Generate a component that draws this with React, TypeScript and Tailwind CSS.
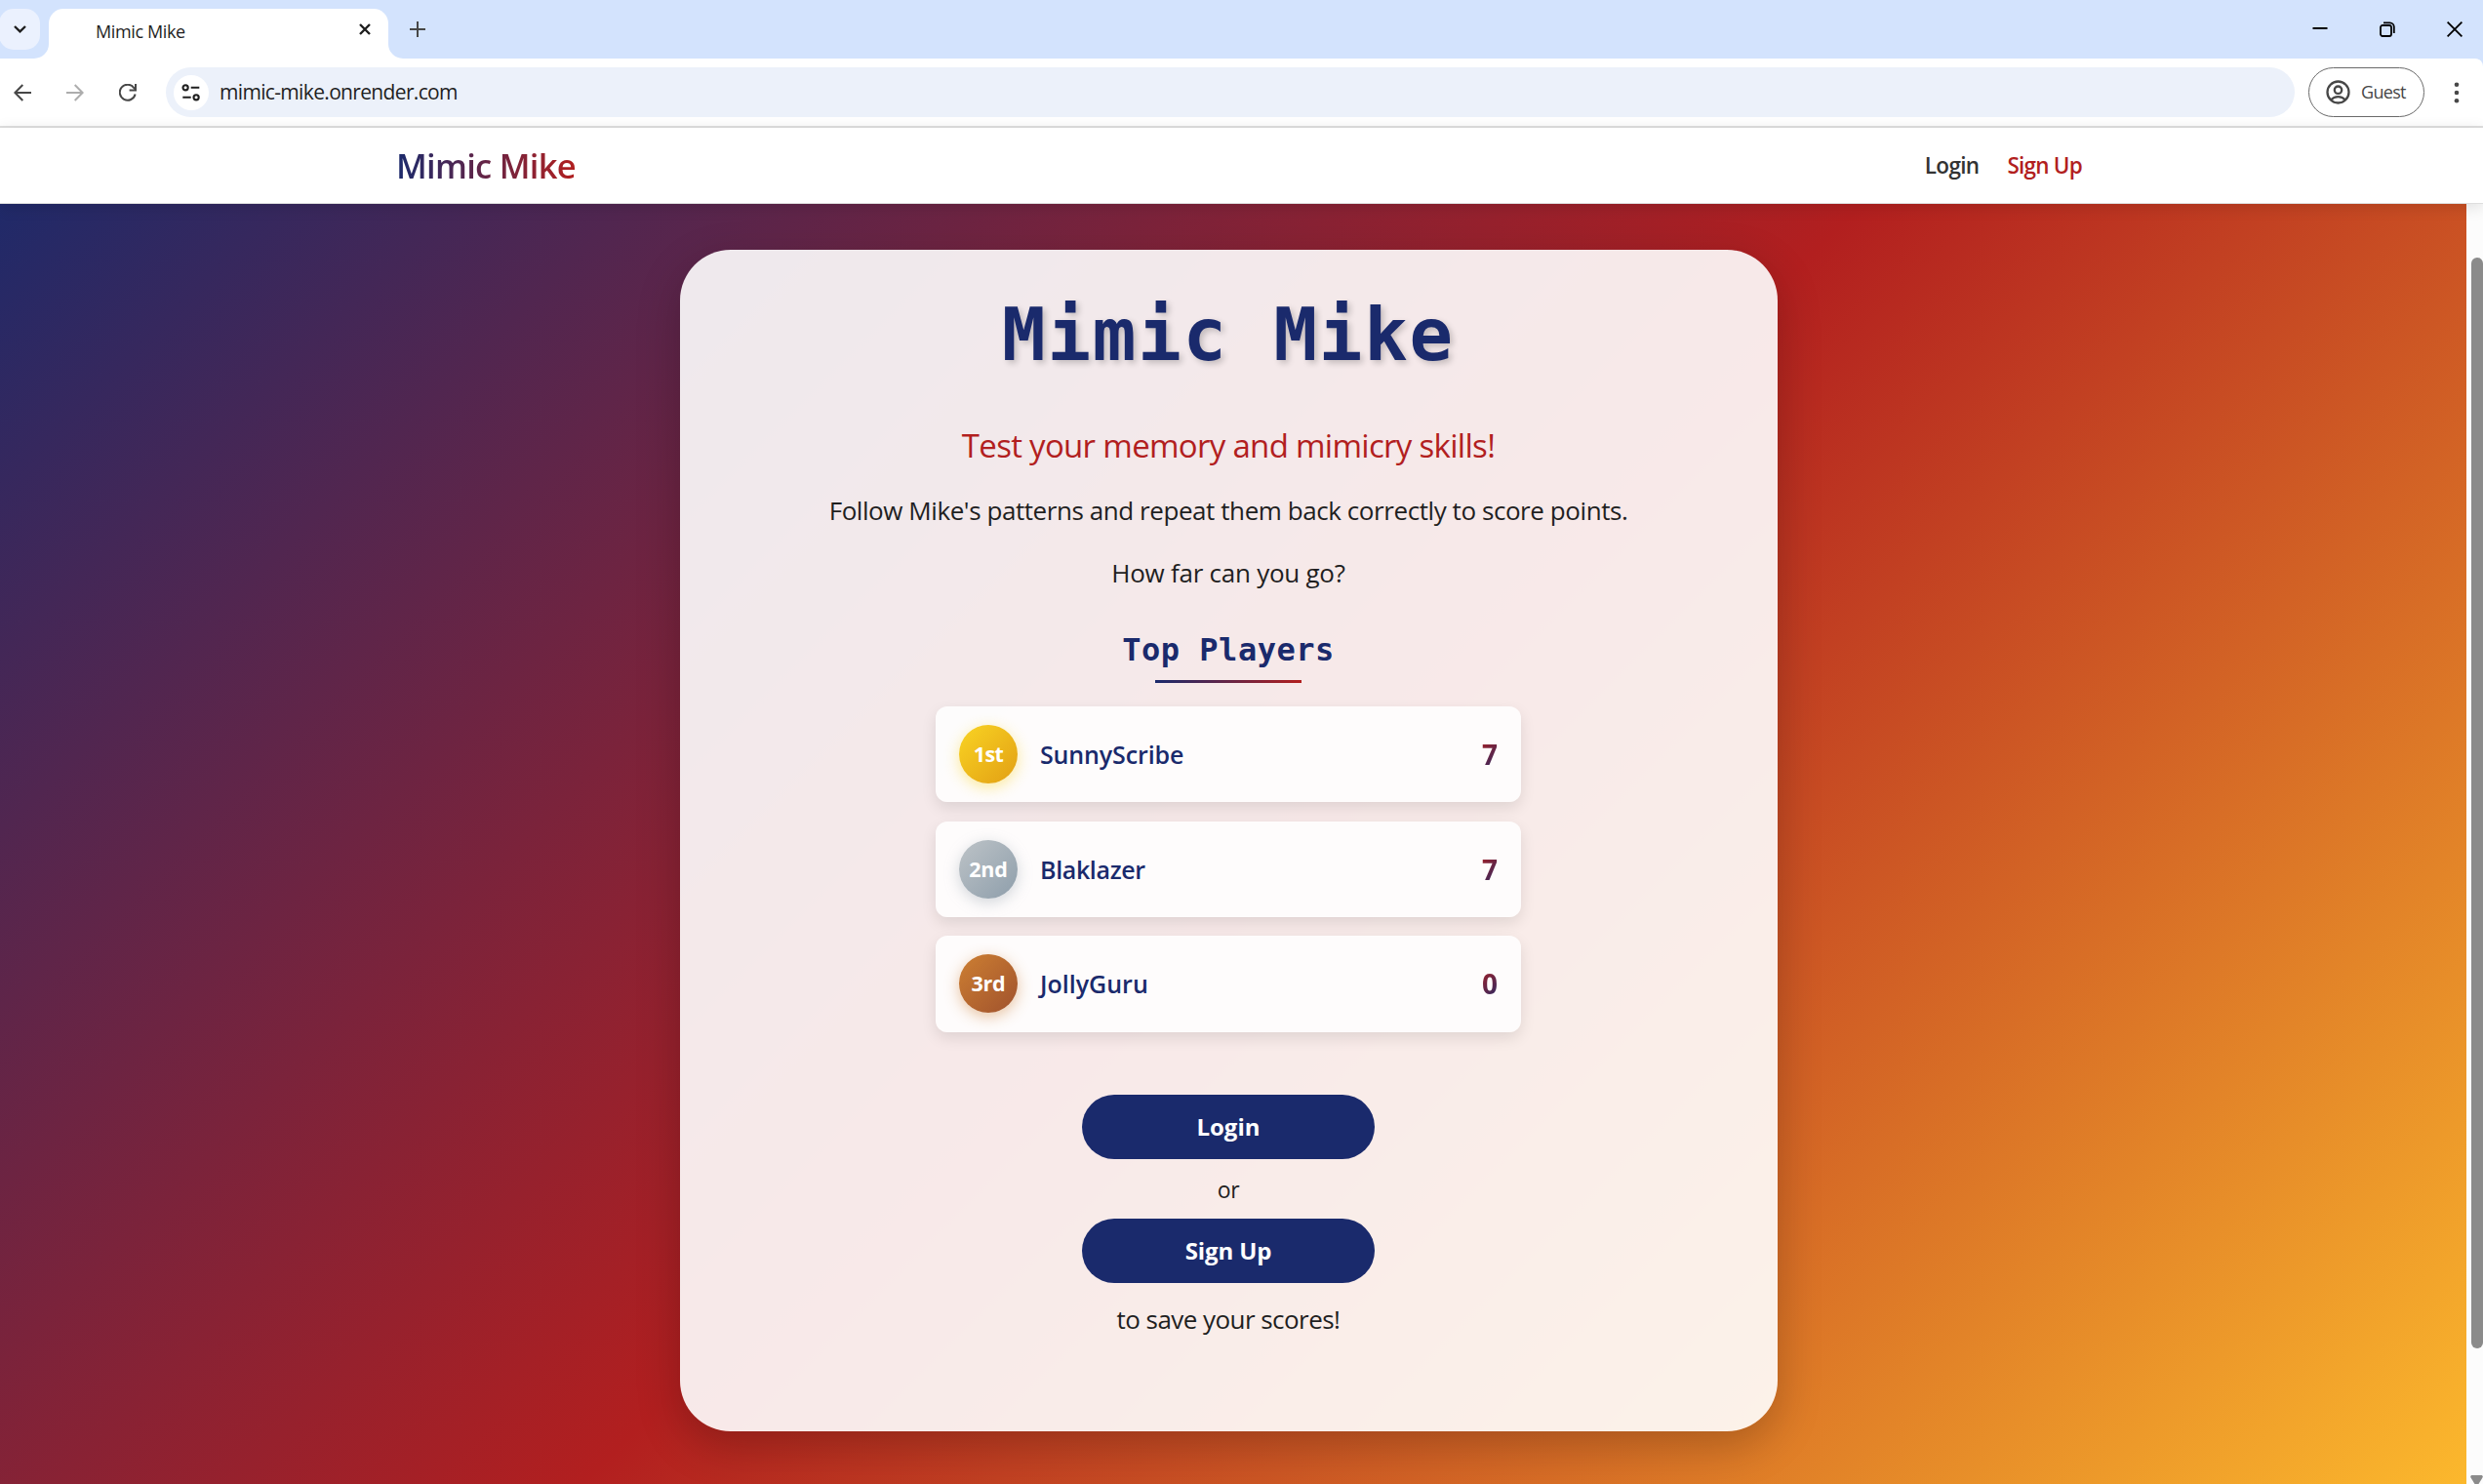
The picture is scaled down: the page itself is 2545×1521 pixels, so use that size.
type Player = { rank: string; name: string; score: number; badge: string; tracking: string; nameTracking: string };

const players: Player[] = [
  {
    rank: '1st',
    name: 'SunnyScribe',
    score: 7,
    badge: 'bg-[linear-gradient(135deg,#f9d423,#e29f14)] shadow-[0_4px_15px_rgba(249,212,35,0.45)]',
    tracking: 'tracking-[-0.6px]',
    nameTracking: 'tracking-[-0.13px]',
  },
  {
    rank: '2nd',
    name: 'Blaklazer',
    score: 7,
    badge: 'bg-[linear-gradient(135deg,#bdc3c7,#8e9eab)] shadow-[0_4px_15px_rgba(142,158,171,0.4)]',
    tracking: 'tracking-[-0.2px]',
    nameTracking: 'tracking-[-0.35px]',
  },
  {
    rank: '3rd',
    name: 'JollyGuru',
    score: 0,
    badge: 'bg-[linear-gradient(135deg,#cd7f32,#a0522d)] shadow-[0_4px_15px_rgba(205,127,50,0.45)]',
    tracking: 'tracking-[-0.3px]',
    nameTracking: 'tracking-[0px]',
  },
];

function TabStrip() {
  return (
    <div className="flex h-[60px] items-end bg-[#d3e3fd]">
      <button className="mb-[9px] -ml-px flex h-[42px] w-[42px] items-center justify-center rounded-[15px] bg-[#ebf1fe]">
        <svg className="h-[8px] w-[13px]" viewBox="0 0 13 8" fill="none" stroke="#1f1f1f" strokeWidth="2.4">
          <path d="M1 1l5.5 5.3L12 1" />
        </svg>
      </button>
      <svg className="-ml-[6px] h-[15px] w-[15px]" viewBox="0 0 15 15" fill="#fff">
        <path d="M15 0v15H0A15 15 0 0 0 15 0z" />
      </svg>
      <div className="flex h-[51px] w-[348px] items-center justify-between rounded-t-[15px] bg-white pr-[18px] pb-[9px] pl-[48px]">
        <span className="relative top-[2px] text-[18px] tracking-[-0.38px] text-[#1f1f1f]">Mimic Mike</span>
        <svg className="h-[12px] w-[12px]" viewBox="0 0 12 12" fill="none" stroke="#1f1f1f" strokeWidth="2.4">
          <path d="M1 1l10 10M11 1L1 11" />
        </svg>
      </div>
      <svg className="h-[15px] w-[15px]" viewBox="0 0 15 15" fill="#fff">
        <path d="M0 0v15h15A15 15 0 0 1 0 0z" />
      </svg>
      <svg className="mb-[22px] ml-[7px] h-[16px] w-[16px]" viewBox="0 0 16 16" fill="none" stroke="#474747" strokeWidth="2">
        <path d="M8 0v16M0 8h16" />
      </svg>
      <div className="mr-[21px] mb-[22px] ml-auto flex items-center gap-[53px]">
        <svg className="h-[16px] w-[16px]" viewBox="0 0 16 16" stroke="#000" strokeWidth="2">
          <path d="M0.5 7h15" />
        </svg>
        <svg className="h-[16px] w-[16px]" viewBox="0 0 16 16" fill="none" stroke="#000" strokeWidth="1.8">
          <rect x="1" y="4" width="11" height="11" rx="2" />
          <path d="M4 1.3h6.5a4.3 4.3 0 0 1 4.3 4.3v6.3" />
        </svg>
        <svg className="h-[16px] w-[16px]" viewBox="0 0 16 16" stroke="#000" strokeWidth="1.8">
          <path d="M0.6 0.6l14.8 14.8M15.4 0.6L0.6 15.4" />
        </svg>
      </div>
    </div>
  );
}

function Toolbar() {
  return (
    <div className="bg-[#d3e3fd]">
      <div className="flex h-[71px] items-center rounded-tr-[8px] border-b-2 border-[#dfdfdf] bg-white">
        <div className="flex items-center gap-[36px] pl-[14px]">
          <svg className="h-[18px] w-[18px]" viewBox="0 0 18 18" fill="none" stroke="#474747" strokeWidth="2">
            <path d="M9.3 1L1.4 9l7.9 8M1.4 9H18" />
          </svg>
          <svg className="h-[18px] w-[18px]" viewBox="0 0 18 18" fill="none" stroke="#adadad" strokeWidth="2">
            <path d="M8.7 1l7.9 8-7.9 8M16.6 9H0" />
          </svg>
          <svg className="h-[18px] w-[18px]" viewBox="0 0 18 18" fill="none" stroke="#474747" strokeWidth="2">
            <path d="M16.6 10.5A8 8 0 1 1 15.4 4.2L17 6" />
            <path d="M17 0v6.4h-6.4" />
          </svg>
        </div>
        <div className="ml-[30px] flex h-[51px] w-[2182px] items-center rounded-full bg-[#ecf1fa] pl-[8px]">
          <div className="flex h-[36px] w-[36px] items-center justify-center rounded-full bg-white">
            <svg className="h-[18px] w-[20px]" viewBox="0 0 20 18" fill="none" stroke="#1f1f1f" strokeWidth="2.1">
              <circle cx="4.1" cy="3.8" r="2.6" />
              <path d="M9.700 3.8h8.6M1.3 13.8h8.4" />
              <circle cx="15.1" cy="13.8" r="2.6" />
            </svg>
          </div>
          <span className="ml-[11px] text-[21px] tracking-[-0.66px] text-[#1f1f1f]">mimic-mike.onrender.com</span>
        </div>
        <div className="ml-[14px] flex h-[51px] w-[119px] items-center rounded-full border border-[#6a6a6a] pl-[17px]">
          <svg className="h-[25px] w-[25px]" viewBox="0 0 25 25" fill="none" stroke="#474747" strokeWidth="2.3">
            <circle cx="12.5" cy="12.5" r="11" />
            <circle cx="12.5" cy="10.2" r="3.7" />
            <path d="M5 20.6c2-2.3 4.6-3.4 7.5-3.4s5.500 1.1 7.5 3.4" />
          </svg>
          <span className="ml-[11px] text-[18px] tracking-[-0.7px] text-[#474747]">Guest</span>
        </div>
        <svg className="ml-[30px] h-[22px] w-[6px]" viewBox="0 0 6 22" fill="#474747">
          <circle cx="3" cy="2.7" r="2.3" />
          <circle cx="3" cy="11" r="2.3" />
          <circle cx="3" cy="19.3" r="2.3" />
        </svg>
      </div>
    </div>
  );
}

function SiteHeader() {
  return (
    <header className="relative z-10 flex h-[78px] items-center justify-between border-b border-[#dedede] bg-white pt-px pr-[411px] pl-[406px] shadow-[0_3px_15px_rgba(0,0,0,0.12)]">
      <span className="bg-[linear-gradient(90deg,#1a2a6c,#b21f1f)] bg-clip-text pr-px text-[34.5px] leading-[50px] font-semibold tracking-[-0.72px] text-transparent">
        Mimic Mike
      </span>
      <nav className="flex items-center gap-[29px] text-[22.5px] font-semibold">
        <a className="tracking-[-0.65px] text-[#333333]">Login</a>
        <a className="tracking-[-0.78px] text-[#b21f1f]">Sign Up</a>
      </nav>
    </header>
  );
}

function PlayerRow({ player }: { player: Player }) {
  return (
    <li className="flex h-[98.4px] items-center rounded-[12px] bg-white/85 px-[24px] shadow-[0_6px_15px_rgba(0,0,0,0.1)]">
      <span
        className={`flex h-[60px] w-[60px] items-center justify-center rounded-full text-[21.5px] font-bold text-white ${player.badge} ${player.tracking}`}
      >
        {player.rank}
      </span>
      <span className={`ml-[23px] pt-px text-[25px] font-semibold text-[#1a2a6c] ${player.nameTracking}`}>{player.name}</span>
      <span className="ml-auto bg-[linear-gradient(135deg,#b21f1f,#1a2a6c)] bg-clip-text text-[28px] leading-[40px] font-bold text-transparent">
        {player.score}
      </span>
    </li>
  );
}

function Card() {
  return (
    <main className="flex h-[1211px] w-[1125px] flex-col items-center rounded-[52px] bg-white/90 pt-[42px] pr-px text-[#1f1f1f] shadow-[0_15px_45px_rgba(0,0,0,0.22)]">
      <h1 className="font-['DejaVu_Sans_Mono',monospace] text-[74px] leading-[91px] font-bold tracking-[1.85px] text-[#1a2a6c] [text-shadow:3px_3px_6px_rgba(0,0,0,0.2)]">
        Mimic Mike
      </h1>
      <p className="mt-[44px] text-[33px] leading-[48px] tracking-[-0.7px] text-[#b21f1f]">Test your memory and mimicry skills!</p>
      <p className="mt-[22px] text-[26px] leading-[40px] tracking-[-0.43px]">
        Follow Mike's patterns and repeat them back correctly to score points.
      </p>
      <p className="mt-[24px] text-[26px] leading-[40px] tracking-[-0.25px]">How far can you go?</p>
      <h2 className="mt-[36px] font-['DejaVu_Sans_Mono',monospace] text-[32px] leading-[46px] font-bold tracking-[0.5px] text-[#1a2a6c]">
        Top Players
      </h2>
      <div className="mt-[8px] h-[3px] w-[150px] bg-[linear-gradient(90deg,#1a2a6c,#b21f1f)]" />
      <ol className="mt-[24px] flex h-[334px] w-[600px] flex-col gap-[19.2px]">
        {players.map((player) => (
          <PlayerRow key={player.name} player={player} />
        ))}
      </ol>
      <button className="mt-[64px] h-[66px] w-[300px] rounded-full bg-[#1a2a6c] text-[24px] font-bold text-white">Login</button>
      <p className="h-[61px] pt-px text-[23px] leading-[61px] tracking-[-0.3px]">or</p>
      <button className="h-[66px] w-[300px] rounded-full bg-[#1a2a6c] text-[24px] font-bold tracking-[-0.1px] text-white">
        Sign Up
      </button>
      <p className="mt-[17px] text-[26px] leading-[40px] tracking-[-0.55px]">to save your scores!</p>
    </main>
  );
}

function Scrollbar() {
  return (
    <div className="flex w-[17px] flex-col items-start bg-[#fcfcfc] pt-[55px] pl-[5px]">
      <div className="h-[1118px] w-[12px] rounded-full bg-[#8b8b8b]" />
      <svg className="mt-auto -ml-px h-[9px] w-[13px]" viewBox="0 0 13 9" fill="#8b8b8b">
        <path d="M1.2 0h10.6q1.5 1 .8 2.3L8.5 9h-4L.4 2.3Q-.2 .8 1.2 0z" />
      </svg>
    </div>
  );
}

export default function App() {
  return (
    <div className="flex h-[1521px] w-[2545px] flex-col overflow-hidden bg-white font-['Open_Sans','Noto_Sans',sans-serif]">
      <TabStrip />
      <Toolbar />
      <SiteHeader />
      <div className="flex h-[1312px]">
        <div className="flex w-[2528px] justify-center bg-[linear-gradient(135deg,#1a2a6c_-2%,#b21f1f_49.7%,#fdbb2d_101%)] pt-[47px] pr-[9px]">
          <Card />
        </div>
        <Scrollbar />
      </div>
    </div>
  );
}
